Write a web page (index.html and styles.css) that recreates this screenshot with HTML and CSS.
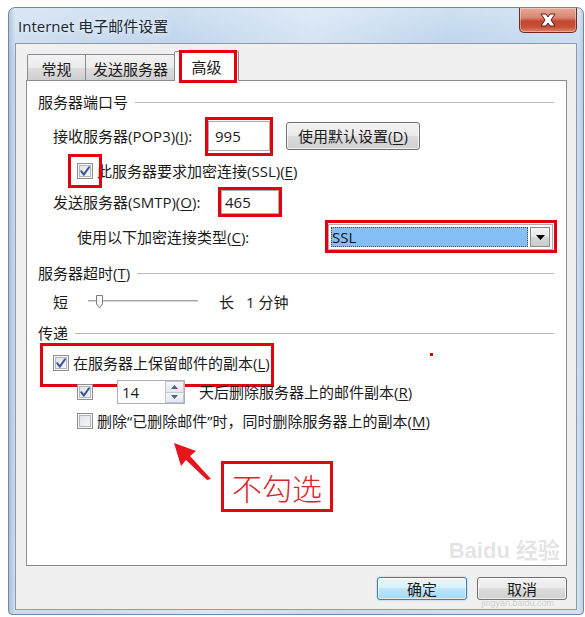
FILE: index.html
```html
<!DOCTYPE html>
<html lang="zh-CN">
<head>
<meta charset="utf-8">
<title>Internet 电子邮件设置</title>
<link rel="stylesheet" href="styles.css">
</head>
<body>
<div class="window">
  <div class="titlebar">
    <span class="title">Internet 电子邮件设置</span>
    <div class="close">
      <svg width="20" height="14" viewBox="0 0 20 14"><path d="M3 1 L8 1 L10 4 L12 1 L17 1 L13 7 L17 13 L12 13 L10 10 L8 13 L3 13 L7 7 Z" fill="#fff" stroke="#5b1a14" stroke-width="1" stroke-linejoin="round"/></svg>
    </div>
  </div>
  <div class="client">
    <div class="tabs">
      <div class="tab tab-first">常规</div>
      <div class="tab tab-second">发送服务器</div>
      <div class="tab tab-active">高级</div>
    </div>
    <div class="panel">
      <div class="group group-first"><span>服务器端口号</span><i class="rule"></i></div>

      <div class="row row-pop">
        <span class="lbl lbl-pop">接收服务器(POP3)(<u>I</u>):</span>
        <span class="textbox tb-pop mark">995</span>
        <span class="btn btn-default">使用默认设置(<u>D</u>)</span>
      </div>

      <div class="row row-ssl">
        <span class="cb cb-ssl mark"><svg width="14" height="14" viewBox="0 0 14 14"><path d="M3.2 7.2 L5.8 10.6 L11 3.2" fill="none" stroke="#3b5398" stroke-width="2" stroke-linecap="round" stroke-linejoin="round"/></svg></span>
        <span class="cb-label">此服务器要求加密连接(SSL)(<u>E</u>)</span>
      </div>

      <div class="row row-smtp">
        <span class="lbl lbl-smtp">发送服务器(SMTP)(<u>O</u>):</span>
        <span class="textbox tb-smtp mark">465</span>
      </div>

      <div class="row row-enc">
        <span class="lbl lbl-enc">使用以下加密连接类型(<u>C</u>):</span>
        <span class="combo mark">
          <span class="combo-sel">SSL</span>
          <span class="combo-arrow"><svg width="9" height="5" viewBox="0 0 9 5"><path d="M0 0 H9 L4.5 5 Z" fill="#000"/></svg></span>
        </span>
      </div>

      <div class="group group-timeout"><span>服务器超时(<u>T</u>)</span><i class="rule"></i></div>

      <div class="row row-slider">
        <span class="short">短</span>
        <svg class="slider" width="110" height="16" viewBox="0 0 110 16">
          <rect x="0" y="6" width="110" height="2" fill="#d6d6d6"/>
          <rect x="0" y="6" width="110" height="1" fill="#a8a8a8"/>
          <path d="M8.5 1.5 H14.5 V10 L11.5 14 L8.5 10 Z" fill="#f4f4f4" stroke="#7b7b7b"/>
          <path d="M10 3 H13 V9" fill="none" stroke="#fff"/>
        </svg>
        <span class="long">长</span>
        <span class="minutes">1 分钟</span>
      </div>

      <div class="group group-deliver"><span>传递</span><i class="rule"></i></div>

      <div class="row row-leave">
        <span class="cb"><svg width="14" height="14" viewBox="0 0 14 14"><path d="M3.2 7.2 L5.8 10.6 L11 3.2" fill="none" stroke="#3b5398" stroke-width="2" stroke-linecap="round" stroke-linejoin="round"/></svg></span>
        <span class="cb-label lbl-leave">在服务器上保留邮件的副本(<u>L</u>)</span>
      </div>

      <div class="row row-days">
        <span class="cb"><svg width="14" height="14" viewBox="0 0 14 14"><path d="M3.2 7.2 L5.8 10.6 L11 3.2" fill="none" stroke="#3b5398" stroke-width="2" stroke-linecap="round" stroke-linejoin="round"/></svg></span>
        <span class="spin">
          <span class="spin-val">14</span>
          <span class="spin-btns">
            <span class="spin-b"><svg width="7" height="4" viewBox="0 0 7 4"><path d="M0 4 L3.5 0 L7 4 Z" fill="#4d6185"/></svg></span>
            <span class="spin-b"><svg width="7" height="4" viewBox="0 0 7 4"><path d="M0 0 L3.5 4 L7 0 Z" fill="#4d6185"/></svg></span>
          </span>
        </span>
        <span class="days-label">天后删除服务器上的邮件副本(<u>R</u>)</span>
      </div>

      <div class="row row-del">
        <span class="cb"></span>
        <span class="cb-label">删除“已删除邮件”时，同时删除服务器上的副本(<u>M</u>)</span>
      </div>

      <div class="note">
        <svg class="note-arrow" width="42" height="40" viewBox="0 0 42 40"><polygon points="3,2 25,10 19,15 40,38 36,39 15,19 10,25" fill="#e8141c"/></svg>
        <div class="note-box">不勾选</div>
      </div>

      <div class="watermark">
        <span class="wm-logo">Bai<b>du</b> 经验</span>
      </div>
    </div>
    <div class="footer">
      <span class="btn btn-ok">确定</span>
      <span class="btn btn-cancel">取消</span>
    </div>
    <div class="wm-url">jingyan.baidu.com</div>
  </div>
</div>
</body>
</html>
```

FILE: styles.css
```css
* { box-sizing: border-box; }
html, body { margin: 0; padding: 0; }
body {
  width: 585px;
  height: 617px;
  overflow: hidden;
  background: #fff;
  font-family: "Open Sans", "Noto Sans CJK SC", sans-serif;
  font-size: 15px;
  color: #1b1b1b;
}
u { text-decoration: underline; text-underline-offset: 2px; }

.window {
  margin: 7px 0 0 8px;
  width: 576px;
  height: 608px;
  border: 1px solid #6d89a6;
  border-radius: 7px 7px 4px 4px;
  padding: 0 6px;
  display: flex;
  flex-direction: column;
  background:
    linear-gradient(90deg, rgba(120,140,165,.35) 0, rgba(120,140,165,.0) 6px, transparent 570px, rgba(120,140,165,.3) 576px),
    linear-gradient(100deg, rgba(255,255,255,.25) 0%, rgba(255,255,255,0) 25%, rgba(255,255,255,.35) 45%, rgba(255,255,255,0) 65%, rgba(255,255,255,.2) 85%),
    linear-gradient(180deg, #cfe0f2 0%, #b9d1ea 8%, #bdd4ec 60%, #c6daee 100%);
}

.titlebar {
  height: 35px;
  display: flex;
  align-items: center;
}
.title {
  padding-left: 3px;
  font-size: 15px;
  color: #1e2630;
  text-shadow: 0 0 6px rgba(255,255,255,.9);
}
.close {
  margin-left: auto;
  align-self: flex-start;
  width: 58px;
  height: 25px;
  border: 1px solid #6a2b22;
  border-top: none;
  border-radius: 0 0 5px 5px;
  background: linear-gradient(180deg, #e9a898 0%, #d98574 40%, #c2452f 55%, #c8513a 80%, #e0856a 100%);
  box-shadow: inset 0 0 0 1px rgba(255,255,255,.35);
  display: flex;
  align-items: center;
  justify-content: center;
}

.client {
  position: relative;
  height: 567px;
  border: 1px solid #8d9aab;
  background: #f0f0f0;
  display: flex;
  flex-direction: column;
}

.tabs {
  margin: 7px 0 0 11px;
  height: 29px;
  display: flex;
  align-items: flex-end;
}
.tab {
  height: 26px;
  padding-top: 3px;
  line-height: 22px;
  text-align: center;
  border: 1px solid #898c95;
  border-bottom: none;
  background: linear-gradient(180deg, #f3f3f3 0%, #ebebeb 50%, #dddddd 51%, #cfcfcf 100%);
  white-space: nowrap;
}
.tab-first { width: 59px; border-radius: 2px 0 0 0; }
.tab-second { width: 90px; border-left: none; }
.tab-active {
  position: relative;
  z-index: 2;
  width: 65px;
  height: 30px;
  margin-left: -2px;
  margin-bottom: -1px;
  padding-top: 4px;
  background: #fff;
  border-radius: 2px 2px 0 0;
}
.tab-active::after {
  content: "";
  position: absolute;
  top: -2px;
  left: 4px;
  right: 1px;
  bottom: -2px;
  border: 3px solid #e3000f;
}

.panel {
  position: relative;
  margin: 0 9px 0 10px;
  height: 486px;
  border: 1px solid #898c95;
  background: #fff;
  padding: 7px 12px 0 11px;
}

.group {
  display: flex;
  align-items: center;
  line-height: 20px;
  white-space: nowrap;
}
.group .rule {
  flex: 1;
  height: 1px;
  margin-left: 7px;
  background: #b9b9b9;
}
.group-first { height: 28px; }
.group-timeout { height: 34px; }
.group-deliver { height: 38px; }

.row {
  position: relative;
  display: flex;
  align-items: center;
  line-height: 20px;
  white-space: nowrap;
}
.row-pop { height: 40px; }
.row-ssl { height: 30px; }
.row-smtp { height: 32px; }
.row-enc { height: 38px; }
.row-slider { height: 24px; }
.row-leave { height: 22px; }
.row-days { height: 36px; }
.row-del { height: 22px; }

.lbl { flex: none; }
.lbl-pop { margin-left: 15px; width: 155px; }
.lbl-smtp { margin-left: 15px; width: 168px; }
.lbl-enc { margin-left: 39px; width: 251px; }

.mark { position: relative; }
.mark::after {
  content: "";
  position: absolute;
  border: 3px solid #e3000f;
  pointer-events: none;
}

.textbox {
  display: flex;
  align-items: center;
  background: #fff;
  border: 1px solid #abadb3;
}
.tb-pop { width: 62px; height: 30px; padding-left: 6px; }
.tb-pop::after { top: -5px; left: -4px; right: -4px; bottom: -6px; }
.tb-smtp { width: 58px; height: 24px; padding-left: 3px; }
.tb-smtp::after { top: -4px; left: -4px; right: -4px; bottom: -4px; }

.btn {
  display: flex;
  align-items: center;
  justify-content: center;
  border: 1px solid #707070;
  border-radius: 3px;
  background: linear-gradient(180deg, #f2f2f2 0%, #ebebeb 49%, #dddddd 50%, #cfcfcf 100%);
  box-shadow: inset 0 0 0 1px rgba(255,255,255,.7);
  white-space: nowrap;
  color: #1b1b1b;
}
.btn-default { margin-left: 16px; width: 134px; height: 28px; }

.cb {
  flex: none;
  width: 16px;
  height: 16px;
  border: 1px solid #8e8f8f;
  background: linear-gradient(135deg, #dfe2e6 0%, #f7f7f7 100%);
  box-shadow: inset 0 0 0 1px #f5f5f5, inset 0 0 0 2px #b3b8be;
  display: flex;
  align-items: center;
  justify-content: center;
}
.row-ssl .cb, .row-days .cb, .row-del .cb { margin-left: 39px; }
.row-leave .cb { margin-left: 15px; }
.cb-ssl::after { top: -10px; left: -10px; right: -10px; bottom: -10px; }
.cb-label { margin-left: 4px; }

.combo {
  width: 225px;
  height: 26px;
  display: flex;
  padding: 2px;
  background: #fff;
  border: 1px solid #abadb3;
}
.combo::after { top: -5px; left: -4px; right: -5px; bottom: -4px; }
.combo-sel {
  flex: 1;
  display: flex;
  align-items: center;
  padding-left: 1px;
  background: #86bff5;
  outline: 1px dotted #4a4a4a;
  outline-offset: -1px;
  color: #111;
}
.combo-arrow {
  width: 20px;
  margin-left: 2px;
  border: 1px solid #8c8c8c;
  background: linear-gradient(180deg, #f4f4f4 0%, #e8e8e8 50%, #d8d8d8 51%, #cccccc 100%);
  display: flex;
  align-items: center;
  justify-content: center;
}

.short { margin-left: 15px; }
.slider { margin-left: 20px; flex: none; }
.long { margin-left: 21px; }
.minutes { margin-left: 12px; }

.row-leave::after {
  content: "";
  position: absolute;
  left: 2px;
  top: -9px;
  width: 228px;
  height: 38px;
  border: 3px solid #e3000f;
}
.row-leave::before {
  content: "";
  position: absolute;
  left: 392px;
  top: 1px;
  width: 3px;
  height: 3px;
  background: #d4000c;
}

.spin {
  margin-left: 24px;
  width: 68px;
  height: 24px;
  border: 1px solid #abadb3;
  display: flex;
  background: #fff;
}
.spin-val { flex: 1; padding-left: 4px; display: flex; align-items: center; }
.spin-btns { width: 19px; display: flex; flex-direction: column; }
.spin-b {
  flex: 1;
  border: 1px solid #c2c7cf;
  background: linear-gradient(180deg, #f6f8fa, #e2e7ee);
  display: flex;
  align-items: center;
  justify-content: center;
}
.spin-b + .spin-b { border-top: none; }
.days-label { margin-left: 14px; }

.note {
  display: flex;
  align-items: flex-start;
  margin: 9px 0 0 133px;
}
.note-arrow { flex: none; }
.note-box {
  margin: 20px 0 0 8px;
  width: 112px;
  height: 51px;
  border: 3px solid #e00a14;
  display: flex;
  align-items: center;
  justify-content: center;
  font-family: "Noto Sans CJK SC", sans-serif;
  font-size: 30px;
  font-weight: 300;
  color: #d8262b;
  line-height: 1;
}

.footer {
  display: flex;
  justify-content: flex-end;
  gap: 10px;
  margin: 11px 9px 0 0;
}
.footer .btn { width: 90px; height: 23px; }
.btn-ok {
  border-color: #3c7fb1;
  background: linear-gradient(180deg, #eaf6fd 0%, #d9f0fc 49%, #bee6fd 50%, #a7d9f5 100%);
  box-shadow: inset 0 0 0 1px rgba(255,255,255,.6), 0 0 2px #7cc3ec;
}

.watermark {
  position: absolute;
  right: 6px;
  bottom: 2px;
  pointer-events: none;
}
.wm-logo {
  font-family: "Liberation Sans", "Noto Sans CJK SC", sans-serif;
  font-size: 22px;
  font-weight: bold;
  color: rgba(160,160,160,.3);
  line-height: 24px;
}
.wm-url {
  position: absolute;
  right: 22px;
  bottom: 1px;
  font-family: "Liberation Sans", sans-serif;
  font-size: 9px;
  line-height: 10px;
  color: rgba(160,160,160,.45);
  pointer-events: none;
}
```
